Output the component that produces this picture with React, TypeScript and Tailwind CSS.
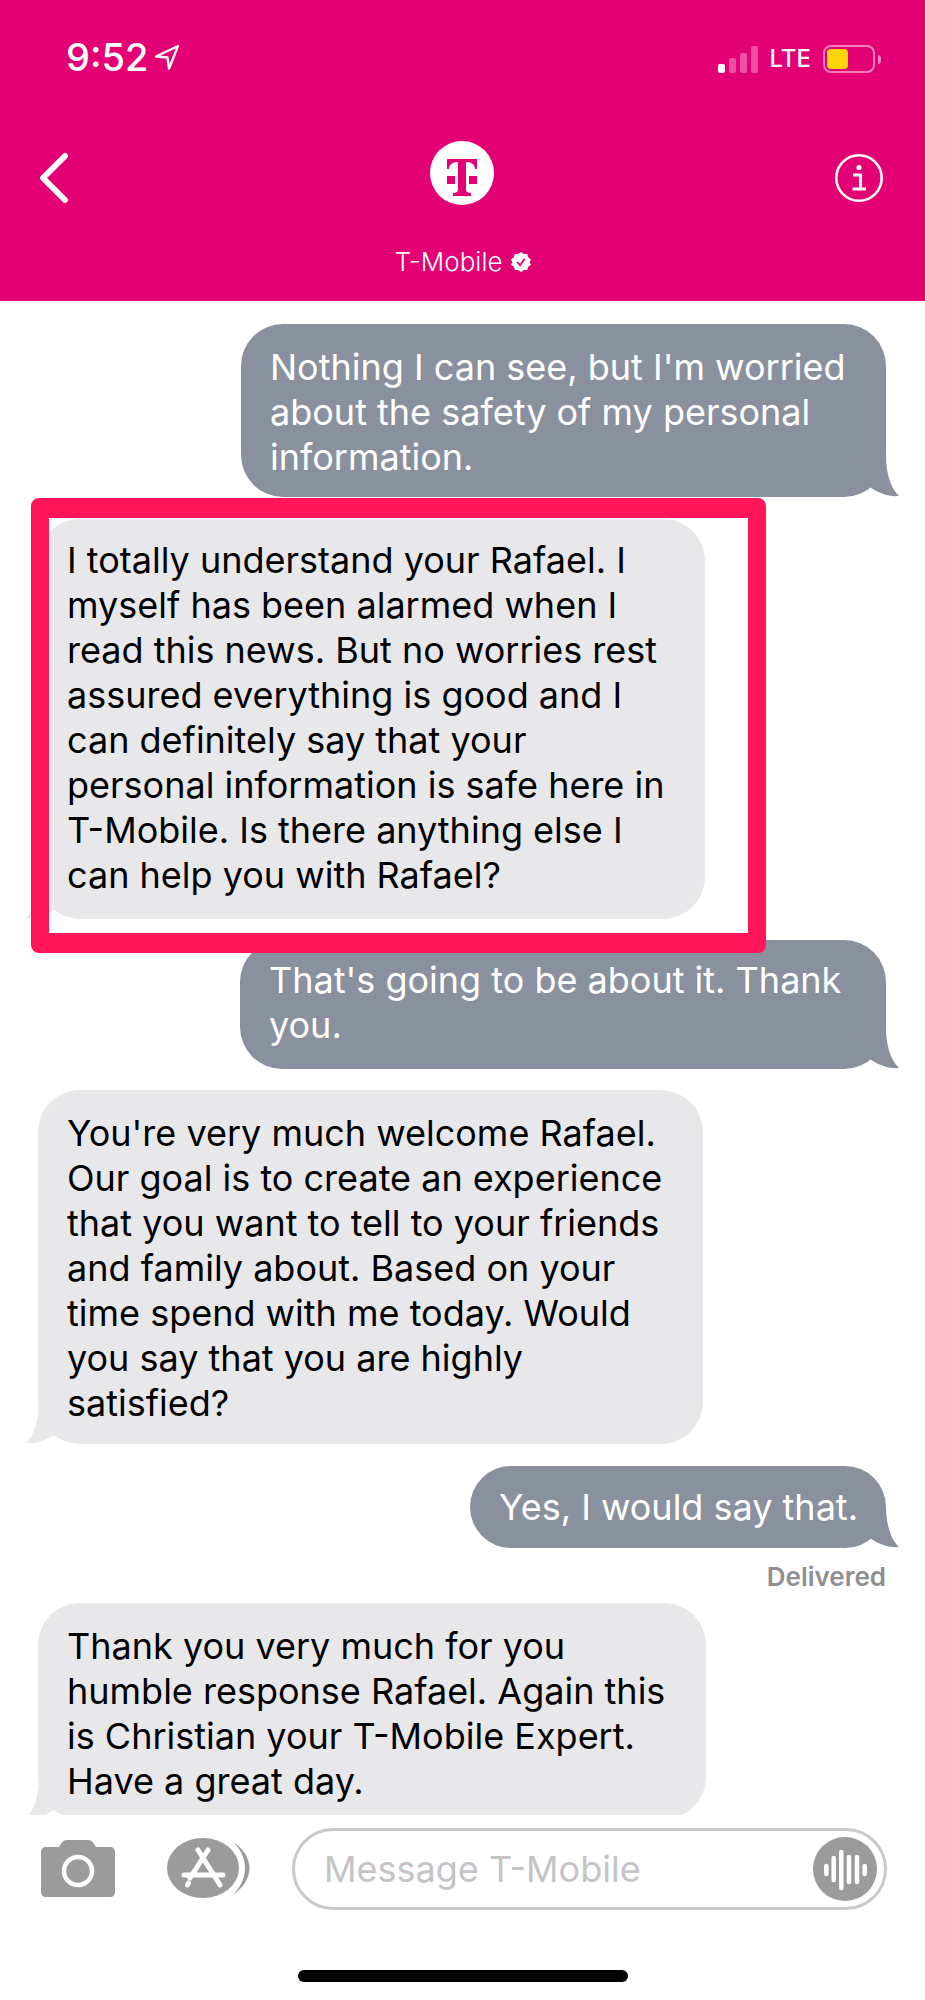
import { ReactNode } from 'react';

const FONT = "font-['Inter','Liberation_Sans',sans-serif]";

function TailRight() {
  return (
    <svg className="absolute right-[-13px] bottom-0" width="30" height="41" viewBox="0 0 30 41">
      <path d="M17 0C17 15 21 32 30 40C20 41 9 37 1 31L1 10Z" fill="#8a919e" />
    </svg>
  );
}

function TailLeft() {
  return (
    <svg className="absolute left-[-12px] bottom-0" width="30" height="41" viewBox="0 0 30 41">
      <path d="M13 0C13 15 9 32 0 40C10 41 21 37 29 31L29 10Z" fill="#e8e8ea" />
    </svg>
  );
}

function Sent({ className, children }: { className: string; children: ReactNode }) {
  return (
    <div
      className={`relative shrink-0 self-end rounded-[42px] bg-[#8a919e] pl-[29px] pr-[22px] text-white whitespace-pre-line ${className}`}
    >
      {children}
      <TailRight />
    </div>
  );
}

function Received({ className, children }: { className: string; children: ReactNode }) {
  return (
    <div
      className={`relative shrink-0 self-start rounded-[42px] bg-[#e8e8ea] pl-[29px] pr-[20px] text-black whitespace-pre-line ${className}`}
    >
      {children}
      <TailLeft />
    </div>
  );
}

function StatusBar() {
  return (
    <div className="flex h-[114px] items-start justify-between pl-[66px] pr-[50px] pt-[35px]">
      <div className="flex items-center gap-[6px] text-[38px] leading-[44px] font-medium text-white">
        9:52
        <svg width="26" height="26" viewBox="0 0 26 26" fill="none" stroke="white" strokeWidth="2.4" strokeLinejoin="round">
          <path d="M24 2L2 12.5L13.500 13.500L15 24.500Z" />
        </svg>
      </div>
      <div className="flex items-center pt-[10px]">
        <div className="flex items-end gap-[4px]">
          <div className="h-[9px] w-[7px] rounded-[2px] bg-white" />
          <div className="h-[15px] w-[7px] rounded-[2px] bg-[#ee4fa4]" />
          <div className="h-[20px] w-[7px] rounded-[2px] bg-[#ee4fa4]" />
          <div className="h-[27px] w-[7px] rounded-[2px] bg-[#ee4fa4]" />
        </div>
        <span className="ml-[12px] text-[24px] leading-[28px] font-medium text-white">LTE</span>
        <div className="relative ml-[12px] flex h-[28px] w-[52px] items-center rounded-[8px] border-2 border-[#f27fbb] p-[2px]">
          <div className="h-full w-[21px] rounded-[4px] bg-[#ffd60a]" />
          <div className="absolute right-[-8px] h-[9px] w-[3px] rounded-r-[3px] bg-[#f27fbb]" />
        </div>
      </div>
    </div>
  );
}

function NavBar() {
  return (
    <div className="relative flex h-[187px] flex-col items-center">
      <div className="flex w-full items-start justify-between pl-[38px] pr-[42px] pt-[38px]">
        <svg width="34" height="52" viewBox="0 0 34 52" fill="none" stroke="white" strokeWidth="6" strokeLinecap="round" strokeLinejoin="round">
          <path d="M27 4L5 26L27 48" />
        </svg>
        <svg className="mt-[2px]" width="48" height="48" viewBox="0 0 48 48" fill="none" stroke="white">
          <circle cx="24" cy="24" r="22.700" strokeWidth="2.600" />
          <circle cx="24" cy="13.500" r="2.600" fill="white" stroke="none" />
          <path d="M18 21H25.500V34.500M17.500 35H31" strokeWidth="3" />
        </svg>
      </div>
      <div className="absolute top-[27px] left-[430px] flex h-[64px] w-[64px] items-center justify-center rounded-full bg-white">
        <svg className="mt-[9px]" width="30" height="37" viewBox="0 0 30 37" fill="#e20074">
          <path d="M0 0H30V10H28C28 6 25 3 19 3V31C19 33 21 34 24 34V37H6V34C9 34 11 33 11 31V3C5 3 2 6 2 10H0Z" />
          <rect x="0" y="17" width="8" height="8" />
          <rect x="22" y="17" width="8" height="8" />
        </svg>
      </div>
      <div className="mt-[42px] flex items-center gap-[8px] text-[26px] leading-[32px] font-light text-white">
        T-Mobile
        <svg width="20" height="20" viewBox="0 0 21 21">
          <path
            d="M10.500 0L13.500 2L17 2L18 5.500L21 8L19.500 10.500L21 13.500L18 15.500L17 19L13.500 19L10.500 21L7.500 19L4 19L3 15.500L0 13.500L1.500 10.500L0 8L3 5.500L4 2L7.500 2Z"
            fill="white"
          />
          <path d="M6.500 10.500L9.500 14L14.500 7" fill="none" stroke="#e20074" strokeWidth="1.800" />
        </svg>
      </div>
    </div>
  );
}

function Composer() {
  return (
    <div className="h-[185px] bg-white">
      <div className="flex items-start pt-[13px] pl-[41px] pr-[38px]">
        <svg className="mt-[12px]" width="74" height="57" viewBox="0 0 74 57">
          <path
            d="M5 7H18L21 2.500C22 1 23.500 0 26 0H47C49.500 0 51 1 52 2.500L55 7H69C72 7 74 9 74 12V52C74 55 72 57 69 57H5C2 57 0 55 0 52V12C0 9 2 7 5 7Z"
            fill="#9b9b9b"
          />
          <circle cx="37" cy="31" r="14" fill="none" stroke="white" strokeWidth="4.500" />
        </svg>
        <svg className="ml-[52px] mt-[10px]" width="84" height="60" viewBox="0 0 84 60">
          <path d="M66 4C76 10 82.500 20 82.500 30C82.500 40 76 50 66 57C73 50 78 40 78 30C78 20 73 10 66 4Z" fill="#9b9b9b" />
          <ellipse cx="36" cy="30" rx="36" ry="30" fill="#9b9b9b" />
          <path d="M41 12L23 40M31 12L53 47M17 37H56M20.500 47L21.500 45" fill="none" stroke="white" strokeWidth="5" strokeLinecap="round" />
        </svg>
        <div className="ml-[41px] flex h-[82px] flex-1 items-center justify-between rounded-[41px] border-[3px] border-[#c9c9c9] pl-[29px] pr-[7px] text-[36px] text-[#c4c4c6]">
          Message T-Mobile
          <svg width="64" height="64" viewBox="0 0 64 64">
            <circle cx="32" cy="32" r="32" fill="#9b9b9b" />
            <path
              d="M13.300 29V37M20.700 21V43M28.300 15V51M36 20V45M44 20V45M51.700 29V37"
              fill="none"
              stroke="white"
              strokeWidth="4.500"
              strokeLinecap="round"
            />
          </svg>
        </div>
      </div>
      <div className="mt-[60px] ml-[298px] h-[12px] w-[330px] rounded-full bg-black" />
    </div>
  );
}

export default function App() {
  return (
    <div className={`relative flex h-[2000px] w-[925px] flex-col overflow-hidden bg-white ${FONT}`}>
      <div className="h-[301px] shrink-0 bg-[#e20074]">
        <StatusBar />
        <NavBar />
      </div>

      <div className="flex min-h-0 flex-1 flex-col overflow-hidden pt-[23px] pl-[38px] pr-[39px] text-[36px] leading-[45px]">
        <Sent className="h-[173px] w-[645px] pt-[21px]">
          {"Nothing I can see, but I'm worried\nabout the safety of my personal\ninformation."}
        </Sent>
        <Received className="mt-[22px] h-[400px] w-[667px] pt-[19px]">
          {"I totally understand your Rafael. I\nmyself has been alarmed when I\nread this news. But no worries rest\nassured everything is good and I\ncan definitely say that your\npersonal information is safe here in\nT-Mobile. Is there anything else I\ncan help you with Rafael?"}
        </Received>
        <Sent className="mt-[21px] h-[129px] w-[646px] pt-[18px]">
          {"That's going to be about it. Thank\nyou."}
        </Sent>
        <Received className="mt-[21px] h-[354px] w-[665px] pt-[21px]">
          {"You're very much welcome Rafael.\nOur goal is to create an experience\nthat you want to tell to your friends\nand family about. Based on your\ntime spend with me today. Would\nyou say that you are highly\nsatisfied?"}
        </Received>
        <Sent className="mt-[22px] h-[82px] w-[416px] pt-[19px]">Yes, I would say that.</Sent>
        <div className="mt-[14px] shrink-0 self-end text-[26px] leading-[30px] font-semibold text-[#8e8e93]">Delivered</div>
        <Received className="mt-[11px] w-[668px] pt-[21px] pb-[15px]">
          {"Thank you very much for you\nhumble response Rafael. Again this\nis Christian your T-Mobile Expert.\nHave a great day."}
        </Received>
      </div>

      <Composer />

      {/* red annotation frame drawn over the screenshot */}
      <div className="absolute top-[498px] left-[31px] h-[455px] w-[735px] rounded-[8px] border-x-[18px] border-y-[20px] border-[#ff1558]" />
    </div>
  );
}
